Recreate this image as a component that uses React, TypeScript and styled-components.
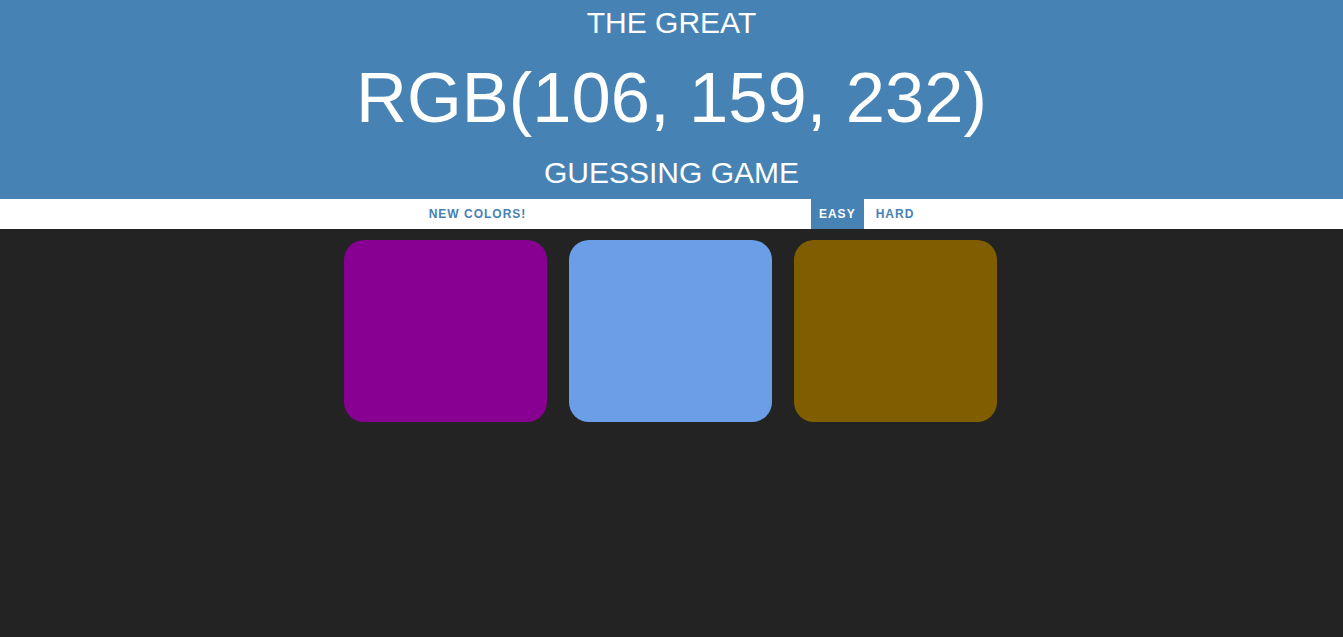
import React from "react";
import styled, { createGlobalStyle } from "styled-components";

const Global = createGlobalStyle`
  html, body { margin: 0; padding: 0; }
  body {
    background: #232323;
    font-family: "Liberation Sans", Arial, sans-serif;
    min-height: 637px;
  }
`;

const Header = styled.h1`
  margin: 0;
  padding: 0 0 4px;
  background: #4682b4;
  color: #fff;
  text-align: center;
  text-transform: uppercase;
  font-weight: normal;
  font-size: 30px;
`;

const Line = styled.span<{ $big?: boolean; $h: number }>`
  display: block;
  font-size: ${(p) => (p.$big ? "70.5px" : "30px")};
  line-height: ${(p) => p.$h}px;
  height: ${(p) => p.$h}px;
`;

const Stripe = styled.div`
  height: 30px;
  background: #fff;
  display: flex;
  justify-content: center;
  align-items: stretch;
  gap: 4px;
`;

const Btn = styled.button<{ $selected?: boolean }>`
  border: none;
  margin: 0;
  padding: 0 8px;
  height: 100%;
  font-family: "Liberation Sans", Arial, sans-serif;
  font-weight: 700;
  font-size: 12px;
  letter-spacing: 1px;
  text-transform: uppercase;
  color: ${(p) => (p.$selected ? "#fff" : "#4682b4")};
  background: ${(p) => (p.$selected ? "#4682b4" : "none")};
  cursor: pointer;
`;

const Message = styled.span`
  display: inline-block;
  width: 20%;
`;

const Grid = styled.div`
  display: flex;
  justify-content: center;
  gap: 22px;
  padding: 11px 2px 0 0;
`;

const Square = styled.div<{ $color: string }>`
  width: 203px;
  height: 182px;
  border-radius: 20px;
  background: ${(p) => p.$color};
`;

export default function App() {
  const colors = ["rgb(135, 0, 145)", "rgb(106, 159, 232)", "rgb(128, 94, 0)"];
  return (
    <>
      <Global />
      <Header>
        <Line $h={45}>The Great</Line>
        <Line $big $h={106}>RGB(106, 159, 232)</Line>
        <Line $h={44}>Guessing Game</Line>
      </Header>
      <Stripe>
        <Btn>New Colors!</Btn>
        <Message />
        <Btn $selected>Easy</Btn>
        <Btn>Hard</Btn>
      </Stripe>
      <Grid>
        {colors.map((c) => (
          <Square key={c} $color={c} />
        ))}
      </Grid>
    </>
  );
}
